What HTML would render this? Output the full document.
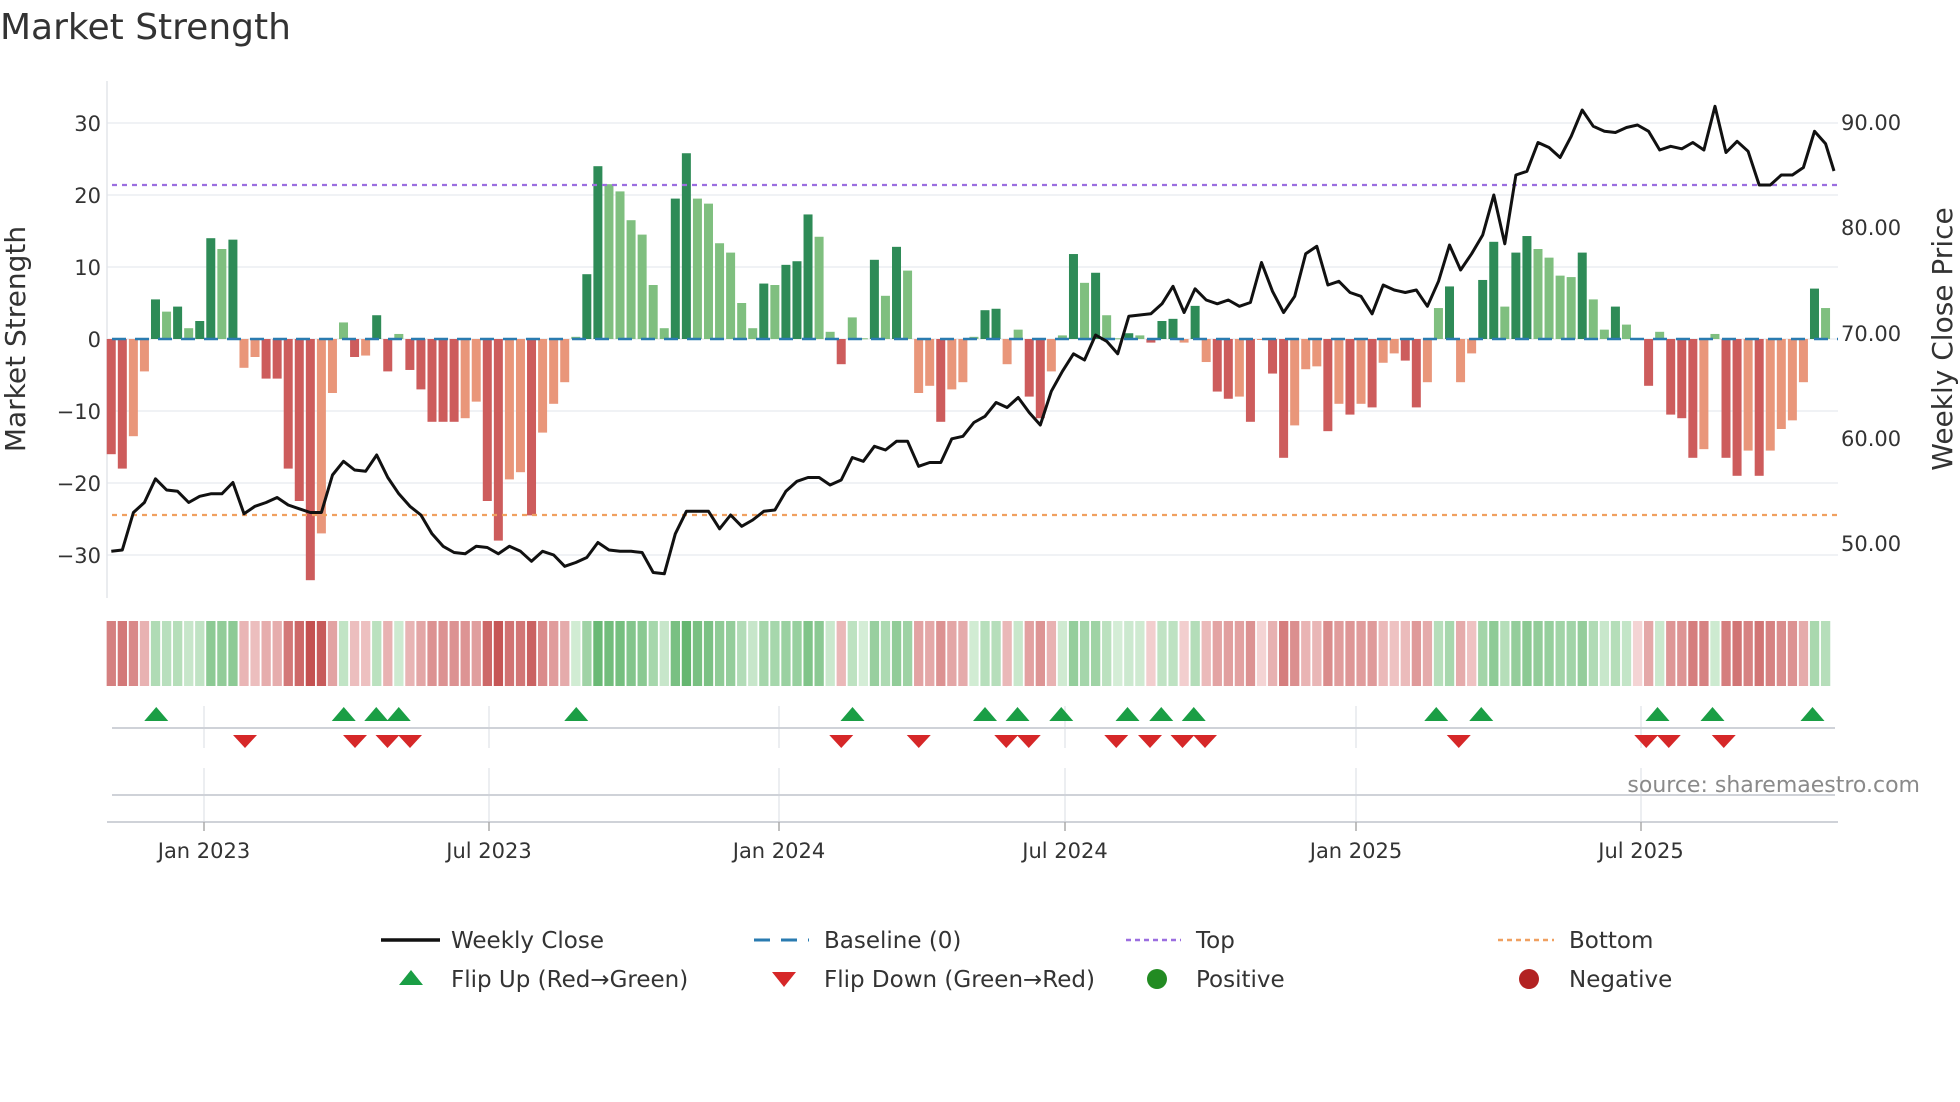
<!DOCTYPE html>
<html><head><meta charset="utf-8"><style>
html,body{margin:0;padding:0;background:#fff;width:1960px;height:1102px;overflow:hidden}
svg{display:block}
text{font-family:"DejaVu Sans","Liberation Sans",sans-serif;fill:#333}
</style></head><body>
<svg id="s" width="1960" height="1102" viewBox="0 0 1960 1102" xmlns="http://www.w3.org/2000/svg">
<text x="0" y="39" font-size="36">Market Strength</text>
<g id="grid" stroke="#eceef2" stroke-width="1.5">
<line x1="107" x2="1838" y1="123" y2="123"/><line x1="107" x2="1838" y1="195" y2="195"/>
<line x1="107" x2="1838" y1="267" y2="267"/><line x1="107" x2="1838" y1="339" y2="339"/>
<line x1="107" x2="1838" y1="411" y2="411"/><line x1="107" x2="1838" y1="483" y2="483"/>
<line x1="107" x2="1838" y1="555" y2="555"/>
</g>
<line x1="107" x2="107" y1="81" y2="598" stroke="#e3e5ea" stroke-width="1.5"/>
<g font-size="21" text-anchor="end">
<text x="101" y="131">30</text><text x="101" y="203">20</text><text x="101" y="275">10</text>
<text x="101" y="347">0</text><text x="101" y="419">−10</text><text x="101" y="491">−20</text><text x="101" y="563">−30</text>
</g>
<g font-size="21">
<text x="1841" y="130">90.00</text><text x="1841" y="235">80.00</text><text x="1841" y="341">70.00</text>
<text x="1841" y="446">60.00</text><text x="1841" y="551">50.00</text>
</g>
<text font-size="28" transform="translate(25,339) rotate(-90)" text-anchor="middle">Market Strength</text>
<text font-size="28" transform="translate(1952,339) rotate(-90)" text-anchor="middle">Weekly Close Price</text>
<g id="bars"></g>
<line x1="112" x2="1838" y1="339" y2="339" stroke="#2a7bb0" stroke-width="2.5" stroke-dasharray="14 9"/>
<line x1="112" x2="1838" y1="185" y2="185" stroke="#9b6ee0" stroke-width="2.2" stroke-dasharray="5 5"/>
<line x1="112" x2="1838" y1="515" y2="515" stroke="#f0a060" stroke-width="2.2" stroke-dasharray="5 5"/>
<polyline id="price" fill="none" stroke="#111" stroke-width="3" stroke-linejoin="round"/>
<g id="heat"></g>
<g stroke="#e6e8ec" stroke-width="1.5">
<line x1="204" x2="204" y1="706" y2="748"/><line x1="489" x2="489" y1="706" y2="748"/><line x1="779" x2="779" y1="706" y2="748"/>
<line x1="1065" x2="1065" y1="706" y2="748"/><line x1="1356" x2="1356" y1="706" y2="748"/><line x1="1641" x2="1641" y1="706" y2="748"/>
<line x1="204" x2="204" y1="768" y2="822"/><line x1="489" x2="489" y1="768" y2="822"/><line x1="779" x2="779" y1="768" y2="822"/>
<line x1="1065" x2="1065" y1="768" y2="822"/><line x1="1356" x2="1356" y1="768" y2="822"/><line x1="1641" x2="1641" y1="768" y2="822"/>
</g>
<line x1="112" x2="1835" y1="728" y2="728" stroke="#cfd2d8" stroke-width="2"/>
<line x1="112" x2="1835" y1="795" y2="795" stroke="#cfd2d8" stroke-width="2"/>
<line x1="107" x2="1838" y1="822" y2="822" stroke="#cfd2d8" stroke-width="2"/>
<g stroke="#aaa" stroke-width="1.5">
<line x1="204" x2="204" y1="822" y2="831"/><line x1="489" x2="489" y1="822" y2="831"/><line x1="779" x2="779" y1="822" y2="831"/>
<line x1="1065" x2="1065" y1="822" y2="831"/><line x1="1356" x2="1356" y1="822" y2="831"/><line x1="1641" x2="1641" y1="822" y2="831"/>
</g>
<g id="marks"></g>
<text x="1920" y="792" font-size="22" text-anchor="end" style="fill:#8a8a8a">source: sharemaestro.com</text>
<g font-size="21" text-anchor="middle">
<text x="204" y="858">Jan 2023</text><text x="489" y="858">Jul 2023</text><text x="779" y="858">Jan 2024</text>
<text x="1065" y="858">Jul 2024</text><text x="1356" y="858">Jan 2025</text><text x="1641" y="858">Jul 2025</text>
</g>
<g font-size="23">
<line x1="381" x2="440" y1="940" y2="940" stroke="#111" stroke-width="3.5"/>
<text x="451" y="948">Weekly Close</text>
<line x1="754" x2="809" y1="940" y2="940" stroke="#2a7bb0" stroke-width="3" stroke-dasharray="16 11"/>
<text x="824" y="948">Baseline (0)</text>
<line x1="1126" x2="1181" y1="940" y2="940" stroke="#9b6ee0" stroke-width="2.5" stroke-dasharray="5 4"/>
<text x="1196" y="948">Top</text>
<line x1="1498" x2="1554" y1="940" y2="940" stroke="#f0a060" stroke-width="2.5" stroke-dasharray="5 4"/>
<text x="1569" y="948">Bottom</text>
<polygon points="411,970 399,985 423,985" fill="#1a9e45"/>
<text x="451" y="987">Flip Up (Red→Green)</text>
<polygon points="772,972 796,972 784,987" fill="#d62728"/>
<text x="824" y="987">Flip Down (Green→Red)</text>
<circle cx="1157" cy="979" r="10" fill="#228b22"/>
<text x="1196" y="987">Positive</text>
<circle cx="1529" cy="979" r="10" fill="#b22222"/>
<text x="1569" y="987">Negative</text>
</g>
</svg>
<script>
var v=[-16,-18,-13.5,-4.5,5.5,3.8,4.5,1.5,2.5,14,12.5,13.8,-4,-2.5,-5.5,-5.5,-18,-22.5,-33.5,-27,-7.5,2.3,-2.5,-2.3,3.3,-4.5,0.7,-4.3,-7,-11.5,-11.5,-11.5,-11,-8.7,-22.5,-28,-19.5,-18.5,-24.5,-13,-9,-6,0.3,9,24,21.5,20.5,16.5,14.5,7.5,1.5,19.5,25.8,19.5,18.8,13.3,12,5,1.5,7.7,7.5,10.3,10.8,17.3,14.2,1,-3.5,3,0.1,11,6,12.8,9.5,-7.5,-6.5,-11.5,-7,-6,0.3,4,4.2,-3.5,1.3,-8,-11,-4.5,0.5,11.8,7.8,9.2,3.3,0.1,0.8,0.5,-0.5,2.5,2.8,-0.5,4.6,-3.2,-7.3,-8.3,-8,-11.5,-0.1,-4.8,-16.5,-12,-4.2,-3.8,-12.8,-9,-10.5,-9,-9.5,-3.3,-2,-3,-9.5,-6,4.3,7.3,-6,-2,8.2,13.5,4.5,12,14.3,12.5,11.3,8.8,8.6,12,5.5,1.3,4.5,2,-0.1,-6.5,1,-10.5,-11,-16.5,-15.3,0.7,-16.5,-19,-15.5,-19,-15.5,-12.5,-11.3,-6,7,4.3];
var p=[441,440,410,402,383,392,393,402,397,395,395,386,411,405,402,398,404,407,410,410,380,369,376,377,364,382,395,405,412,427,437,442,443,437,438,443,437,441,449,441,444,453,450,446,434,440,441,441,442,458,459,427,409,409,409,423,412,421,416,409,408,393,385,382,382,388,384,366,369,357,360,353,353,373,370,370,351,349,338,333,322,326,318,330,340,313,297,283,288,268,273,283,253,252,251,243,229,250,231,240,243,240,245,242,210,233,250,237,203,197,228,225,234,237,251,228,232,234,232,245,225,196,216,203,188,156,195,140,137,114,118,126,109,88,101,105,106,102,100,105,120,117,119,114,120,85,122,113,121,148,148,140,140,134,105,115];
var ns="http://www.w3.org/2000/svg",B=document.getElementById('bars'),H=document.getElementById('heat');
function X(i){return 111.25+11.06*i}
function el(t,a,par){var e=document.createElementNS(ns,t);for(var k in a)e.setAttribute(k,a[k]);par.appendChild(e);return e}
function mix(a,b,t){var r=[];for(var k=0;k<3;k++)r.push(Math.round(a[k]+(b[k]-a[k])*t));return 'rgb('+r.join(',')+')'}
var pts=[];
for(var i=0;i<v.length;i++){
 var x=X(i),val=v[i],prev=i?v[i-1]:0,up=Math.abs(val)>=Math.abs(prev);
 var col=val>=0?(up?'#2e8b57':'#7fbf7f'):(up?'#cd5c5c':'#e9967a');
 var y0=339,y1=339-val*7.2;
 el('rect',{x:x-4.5,y:Math.min(y0,y1),width:9,height:Math.max(1,Math.abs(y1-y0)),fill:col},B);
 var t=Math.min(1,Math.abs(val)/30);
 var c=val>=0?mix([214,238,216],[88,176,100],Math.pow(t,0.7)):mix([245,214,214],[196,80,80],Math.pow(t,0.7));
 el('rect',{x:x-4.6,y:621,width:9.3,height:65,fill:c},H);
 pts.push(x.toFixed(1)+','+(p[i]*1.25).toFixed(1));
}
pts.push('1834,171');
document.getElementById('price').setAttribute('points',pts.join(' '));
var M=document.getElementById('marks');
[125,275,301,319,461,682,788,814,849,902,929,955,1149,1185,1326,1370,1450].forEach(function(d){var x=d*1.25;el('polygon',{points:x+',707 '+(x-12)+',721 '+(x+12)+',721',fill:'#1a9e45'},M)});
[196,284,310,328,673,735,805,823,893,920,946,964,1167,1317,1335,1379].forEach(function(d){var x=d*1.25;el('polygon',{points:(x-12)+',735 '+(x+12)+',735 '+x+',748',fill:'#d62728'},M)});
</script>
</body></html>
